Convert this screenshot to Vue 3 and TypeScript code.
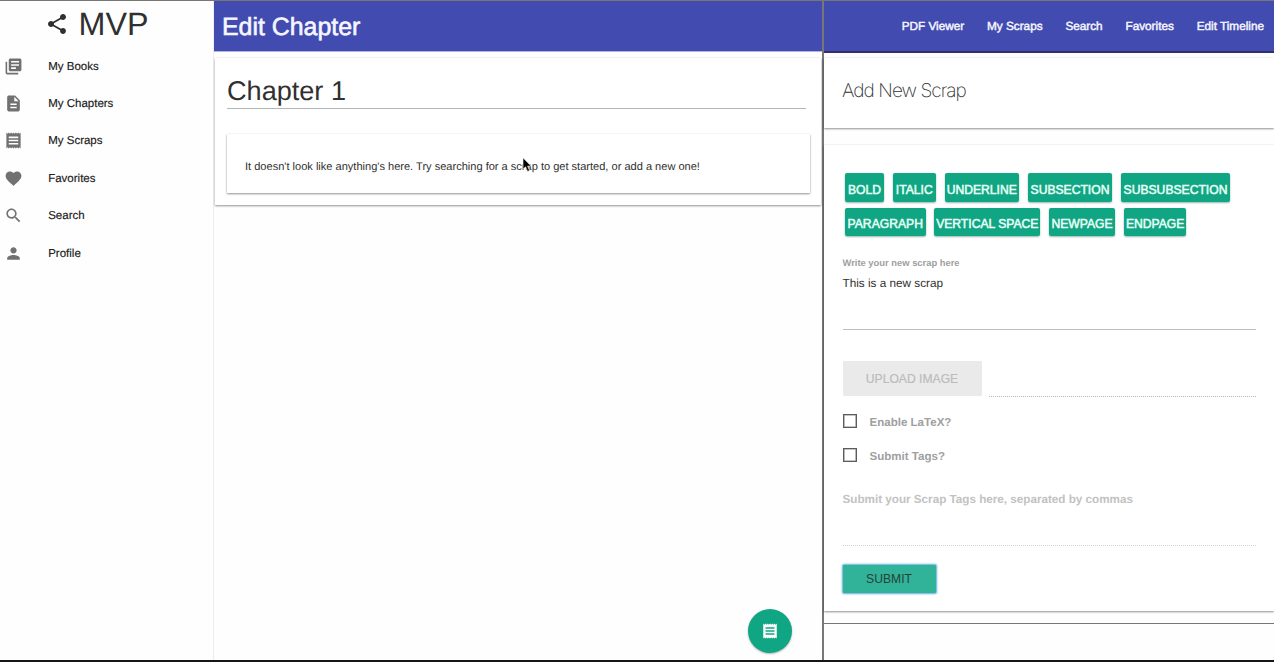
<script setup lang="ts">
interface MenuItem {
  label: string
  path: string
}

const receipt =
  'M18 17H6v-2h12v2zm0-4H6v-2h12v2zm0-4H6V7h12v2zM3 22l1.5-1.5L6 22l1.5-1.5L9 22l1.5-1.5L12 22l1.5-1.5L15 22l1.5-1.5L18 22l1.5-1.5L21 22V2l-1.5 1.5L18 2l-1.5 1.5L15 2l-1.5 1.5L12 2l-1.5 1.5L9 2 7.5 3.5 6 2 4.5 3.5 3 2v20z'

const menu: MenuItem[] = [
  { label: 'My Books', path: 'M4 6H2v14c0 1.1.9 2 2 2h14v-2H4V6zm16-4H8c-1.1 0-2 .9-2 2v12c0 1.1.9 2 2 2h12c1.1 0 2-.9 2-2V4c0-1.1-.9-2-2-2zm-1 9H9V9h10v2zm-4 4H9v-2h6v2zm4-8H9V5h10v2z' },
  { label: 'My Chapters', path: 'M14 2H6c-1.1 0-1.99.9-1.99 2L4 20c0 1.1.89 2 1.99 2H18c1.1 0 2-.9 2-2V8l-6-6zm2 16H8v-2h8v2zm0-4H8v-2h8v2zm-3-5V3.5L18.5 9H13z' },
  { label: 'My Scraps', path: receipt },
  { label: 'Favorites', path: 'M12 21.35l-1.45-1.32C5.4 15.36 2 12.28 2 8.5 2 5.42 4.42 3 7.5 3c1.74 0 3.41.81 4.5 2.09C13.09 3.81 14.76 3 16.5 3 19.58 3 22 5.42 22 8.5c0 3.78-3.4 6.86-8.55 11.54L12 21.35z' },
  { label: 'Search', path: 'M15.5 14h-.79l-.28-.27C15.41 12.59 16 11.11 16 9.5 16 5.91 13.09 3 9.5 3S3 5.91 3 9.5 5.91 16 9.5 16c1.61 0 3.09-.59 4.23-1.57l.27.28v.79l5 4.99L20.49 19l-4.99-5zm-6 0C7.01 14 5 11.99 5 9.5S7.01 5 9.5 5 14 7.01 14 9.5 11.99 14 9.5 14z' },
  { label: 'Profile', path: 'M12 12c2.21 0 4-1.79 4-4s-1.79-4-4-4-4 1.79-4 4 1.79 4 4 4zm0 2c-2.67 0-8 1.34-8 4v2h16v-2c0-2.66-5.33-4-8-4z' },
]

const links: string[] = ['PDF Viewer', 'My Scraps', 'Search', 'Favorites', 'Edit Timeline']
const firstRow: string[] = ['BOLD', 'ITALIC', 'UNDERLINE', 'SUBSECTION', 'SUBSUBSECTION']
const secondRow: string[] = ['PARAGRAPH', 'VERTICAL SPACE', 'NEWPAGE', 'ENDPAGE']
</script>

<template>
  <div class="app">
    <aside class="sidebar">
      <div class="brand">
        <svg class="share" viewBox="0 0 24 24"><path d="M18 16.08c-.76 0-1.44.3-1.96.77L8.91 12.7c.05-.23.09-.46.09-.7s-.04-.47-.09-.7l7.05-4.11c.54.5 1.25.81 2.04.81 1.66 0 3-1.34 3-3s-1.34-3-3-3-3 1.34-3 3c0 .24.04.47.09.7L8.04 9.81C7.5 9.31 6.79 9 6 9c-1.66 0-3 1.34-3 3s1.34 3 3 3c.79 0 1.5-.31 2.04-.81l7.12 4.16c-.05.21-.08.43-.08.65 0 1.61 1.31 2.92 2.92 2.92s2.92-1.31 2.92-2.92-1.31-2.92-2.92-2.92z" /></svg>
        <span>MVP</span>
      </div>
      <nav class="menu">
        <a v-for="item in menu" :key="item.label" class="menu-item">
          <svg class="menu-icon" viewBox="0 0 24 24"><path :d="item.path" /></svg>
          <span>{{ item.label }}</span>
        </a>
      </nav>
    </aside>

    <main class="editor">
      <header class="bar"><h1>Edit Chapter</h1></header>
      <section class="card chapter">
        <div class="chapter-title">Chapter 1</div>
        <div class="card empty">It doesn't look like anything's here. Try searching for a scrap to get started, or add a new one!</div>
      </section>
      <button class="fab"><svg viewBox="0 0 24 24"><path :d="receipt" /></svg></button>
      <svg class="cursor" viewBox="0 0 10 16"><path d="M1 .8v11.4l2.6-2.4 2 4.6 2-.9-2-4.4h3.5z" /></svg>
    </main>

    <section class="panel">
      <header class="bar links">
        <a v-for="link in links" :key="link">{{ link }}</a>
      </header>
      <div class="card heading">Add New Scrap</div>
      <form class="card form" @submit.prevent>
        <div class="tools first">
          <button v-for="t in firstRow" :key="t" type="button">{{ t }}</button>
        </div>
        <div class="tools second">
          <button v-for="t in secondRow" :key="t" type="button">{{ t }}</button>
        </div>
        <label class="scrap-label">Write your new scrap here</label>
        <div class="scrap-text">This is a new scrap</div>
        <div class="upload-row">
          <button type="button" class="upload" disabled>UPLOAD IMAGE</button>
          <div class="upload-path"></div>
        </div>
        <label class="check"><i></i><span>Enable LaTeX?</span></label>
        <label class="check"><i></i><span>Submit Tags?</span></label>
        <div class="tags">Submit your Scrap Tags here, separated by commas</div>
        <button class="submit">SUBMIT</button>
      </form>
      <hr class="rule" />
    </section>
  </div>
</template>

<style>
body { margin: 0; overflow: hidden; background: #fefefe; }
</style>

<style scoped>
* { box-sizing: border-box; }
.app {
  display: flex;
  width: 1274px;
  height: 662px;
  border-top: 1px solid #777773;
  border-bottom: 2px solid #171417;
  background: #fefefe;
  color: #303030;
  font-family: "Liberation Sans", Arial, sans-serif;
  text-rendering: geometricPrecision;
  white-space: nowrap;
  overflow: hidden;
}
button { font-family: inherit; border: 0; padding: 0; margin: 0; }

.sidebar { width: 214px; flex: none; border-right: 1px solid #ededed; }
.brand {
  display: flex;
  align-items: center;
  height: 46px;
  padding-left: 45px;
  font-size: 32.3px;
  color: #303030;
}
.share { width: 24px; height: 24px; margin-right: 9.5px; fill: #303030; }
.menu { display: flex; flex-direction: column; padding-top: 0.5px; }
.menu-item {
  display: flex;
  align-items: center;
  height: 37.4px;
  padding-left: 4px;
  font-size: 11.5px;
  color: #202020;
  -webkit-text-stroke: 0.15px #202020;
}
.menu-item span { padding-top: 1px; }
.menu-icon { width: 19px; height: 19px; margin-right: 25.2px; fill: #717171; }

.card {
  background: #fff;
  box-shadow: 0 1px 2px rgba(0, 0, 0, 0.42), 0 0 1px rgba(0, 0, 0, 0.1);
}
.bar { height: 50px; background: #424bb0; color: #f6f6ff; }

.editor { position: relative; width: 608px; flex: none; }
.editor .bar { height: 51px; display: flex; align-items: center; padding: 2px 0 0 8px; border-bottom: 1px solid #b2b5e2; }
h1 {
  margin: 0;
  font-size: 24.9px;
  font-weight: 400;
  -webkit-text-stroke: 0.6px #f6f6ff;
}
.chapter { margin: 6px 1px 0; height: 147px; padding: 14px 12px 0 12px; }
.chapter-title {
  width: 579px;
  height: 37px;
  line-height: 37px;
  border-bottom: 1px solid #b5b5b5;
  font-size: 27.1px;
}
.empty {
  width: 583px;
  height: 59px;
  margin-top: 25px;
  padding-left: 18px;
  line-height: 67px;
  font-size: 11.06px;
}
.fab {
  position: absolute;
  left: 534px;
  top: 608px;
  display: grid;
  place-items: center;
  width: 44px;
  height: 44px;
  border-radius: 50%;
  background: #10a683;
  box-shadow: 0 1px 2px rgba(0, 0, 0, 0.3);
}
.fab svg { width: 18px; height: 18px; fill: #fff; }
.cursor { position: absolute; left: 308px; top: 156px; width: 10px; height: 16px; fill: #000; stroke: #fff; stroke-width: 0.6; }

.panel { flex: 1; border-left: 2px solid #777; }
.links {
  height: 52px;
  display: flex;
  justify-content: flex-end;
  align-items: center;
  gap: 22.8px;
  padding: 1px 10px 0 0;
  border-bottom: 2px solid #302f70;
  font-size: 11.78px;
  -webkit-text-stroke: 0.45px #f6f6ff;
}
.heading {
  height: 70px;
  margin-top: 5px;
  padding-left: 18px;
  line-height: 66px;
  font-family: Inter, "Liberation Sans", sans-serif;
  font-size: 19px;
  font-weight: 200;
  letter-spacing: -0.95px;
}
.form { height: 466px; margin-top: 17px; padding: 28px 18px 0 18.5px; }
.tools { display: grid; height: 28.5px; padding-left: 2.5px; margin-bottom: 6px; }
.first { grid-template-columns: 39px 42.5px 74.5px 84px 109px; column-gap: 9px; }
.second { grid-template-columns: 80.5px 106px 66px 62.5px; column-gap: 8.8px; }
.tools button {
  border-radius: 2px;
  background: #10a683;
  color: #e8fff8;
  font-size: 12.15px;
  padding-top: 5px;
  -webkit-text-stroke: 0.5px #e8fff8;
  white-space: nowrap;
  box-shadow: 0 1px 2px rgba(0, 80, 60, 0.4);
}
.scrap-label {
  display: block;
  margin-top: 21px;
  height: 13px;
  line-height: 13px;
  font-size: 9.38px;
  font-weight: 700;
  color: #a0a0a0;
}
.scrap-text {
  height: 60px;
  padding-top: 7px;
  line-height: 14px;
  font-size: 11.75px;
  border-bottom: 1px solid #bdbdbd;
}
.upload-row { display: flex; gap: 7.5px; margin-top: 31px; }
.upload {
  width: 139px;
  height: 35px;
  border-radius: 1px;
  background: #eaeaea;
  color: #bcbcbc;
  font-size: 12.15px;
  -webkit-text-stroke: 0.2px #bcbcbc;
}
.upload-path { flex: 1; height: 36px; border-bottom: 1px dotted #b8b8b8; }
.check { display: flex; align-items: center; height: 34px; font-size: 11.55px; font-weight: 700; color: #a0a0a0; }
.upload-row + .check { margin-top: 7px; }
.check i { width: 14px; height: 14px; border: 1px solid #5c5c5c; box-shadow: inset 0 0 0 0.6px #8a8a8a; margin-right: 13px; }
.check span { padding-top: 3px; }
.tags {
  height: 74px;
  padding-top: 21px;
  line-height: 14px;
  font-size: 11.68px;
  font-weight: 700;
  color: #c2c2c2;
  border-bottom: 1px dotted #d2d2d2;
}
.submit {
  display: block;
  width: 93px;
  height: 28px;
  margin-top: 18.5px;
  border-radius: 1px;
  background: #30b398;
  color: #293f39;
  font-size: 12.15px;
  box-shadow: 0 0 2px 1px #5eace0;
}
.rule { margin: 12px 0 0; height: 1px; border: 0; background: #777; }
</style>
